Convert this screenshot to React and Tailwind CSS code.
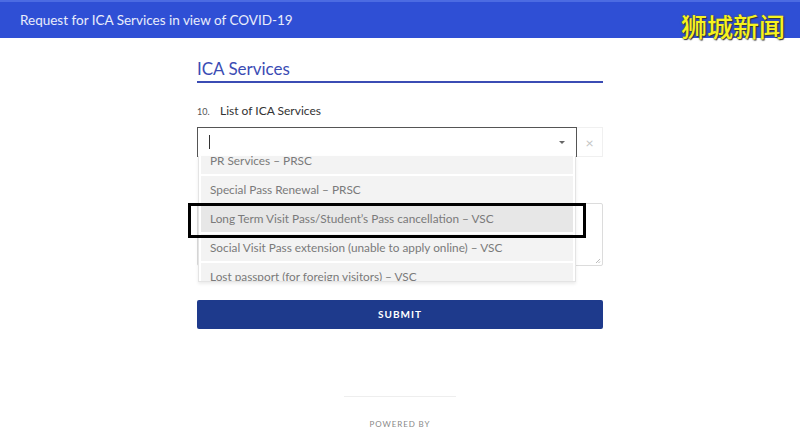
import { useState } from "react";

const services = [
  "PR Services – PRSC",
  "Special Pass Renewal – PRSC",
  "Long Term Visit Pass/Student’s Pass cancellation – VSC",
  "Social Visit Pass extension (unable to apply online) – VSC",
  "Lost passport (for foreign visitors) – VSC",
];

function ServiceList({ active }) {
  return (
    <div className="absolute left-[1px] top-[29px] w-[378px] h-[126px] overflow-hidden bg-white border border-[#e4e4e4] border-t-0 shadow-[0_2px_3px_rgba(0,0,0,0.08)] z-10">
      <div className="-mt-[9px] flex flex-col gap-[2px] px-[2px]">
        {services.map((s, i) => (
          <div
            key={s}
            className={
              "h-[27px] shrink-0 flex items-center px-[9px] text-[11.8px] text-[#7a7a7a] " +
              (i === active ? "bg-[#e7e7e7]" : "bg-[#f3f3f3]")
            }
          >
            {s}
          </div>
        ))}
      </div>
    </div>
  );
}

export default function App() {
  const [active] = useState(2);

  return (
    <div className="w-[800px] h-[435px] bg-white overflow-hidden relative font-['Lato',sans-serif]">
      <header className="h-[38px] bg-[#2f4fd5] border-t-2 border-[#4c6be2] flex items-center px-5">
        <h1 className="text-[13.5px] text-white/90">
          Request for ICA Services in view of COVID-19
        </h1>
      </header>

      {/* watermark */}
      <div className="absolute right-[15px] top-[13px] text-[26px] leading-none text-[#f6f31e] font-['Noto_Sans_CJK_SC',sans-serif] font-medium [text-shadow:1px_1px_1px_#333,0_0_2px_#555]">
        狮城新闻
      </div>

      <main className="w-[406px] mx-auto pt-[20px]">
        <h2 className="text-[17px] text-[#3b4cb4] pb-[1px] border-b-2 border-[#3b4cb4] leading-[22px]">
          ICA Services
        </h2>

        <div className="mt-[19px] flex items-baseline">
          <span className="text-[9px] text-[#555] w-[23px]">10.</span>
          <span className="text-[12px] text-[#333]">List of ICA Services</span>
        </div>

        <div className="mt-[7px] flex">
          <div className="relative w-[380px]">
            <div className="h-[30px] border border-[#555] bg-white flex items-center px-[11px]">
              <span className="w-px h-[14px] bg-[#333]" />
              <span className="ml-auto w-0 h-0 border-l-[3px] border-r-[3px] border-t-[3px] border-l-transparent border-r-transparent border-t-[#666]" />
            </div>
            <ServiceList active={active} />
          </div>
          <div className="w-[26px] h-[30px] border border-[#f0f0f0] border-l-0 flex items-center justify-center text-[#c4c4c4] text-[14px]">
            ×
          </div>
        </div>

        <div className="mt-[46px] relative h-[63px] border border-[#dcdcdc] rounded-[2px]">
          <svg className="absolute right-[1px] bottom-[1px]" width="6" height="6" viewBox="0 0 6 6">
            <path d="M5 1L1 5M5 3.5L3.5 5" stroke="#bbb" strokeWidth="1" />
          </svg>
        </div>

        <button className="mt-[34px] w-full h-[29px] bg-[#1e3a8c] rounded-[2px] text-white text-[10px] font-bold tracking-[1px]">
          SUBMIT
        </button>

        <div className="mt-[67px] mx-auto w-[112px] h-px bg-[#eeeeee]" />
        <div className="mt-[21px] text-center text-[8px] tracking-[0.9px] text-[#888]">
          POWERED BY
        </div>
      </main>

      {/* annotation box */}
      <div className="absolute left-[188px] top-[203px] w-[398px] h-[35px] border-[3px] border-black z-20 pointer-events-none" />
    </div>
  );
}
